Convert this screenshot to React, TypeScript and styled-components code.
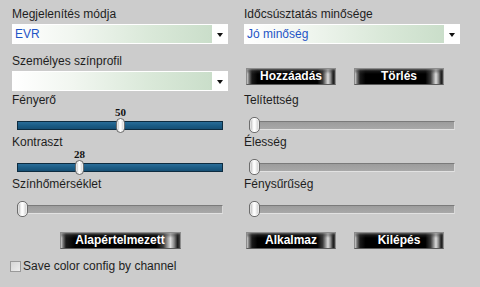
import React from "react";
import styled, { createGlobalStyle } from "styled-components";

const GlobalStyle = createGlobalStyle`
  html, body {
    margin: 0;
    padding: 0;
    background: #cccccc;
  }
  body {
    font-family: "Liberation Sans", Arial, sans-serif;
    font-size: 12px;
    color: #1e1e1e;
  }
`;

const Page = styled.div`
  width: 480px;
  height: 287px;
  box-sizing: border-box;
  padding: 7px 0 0 12px;
  background: #cccccc;
  overflow: hidden;
`;

const Grid = styled.div`
  display: grid;
  grid-template-columns: 216px 216px;
  grid-template-rows: 47px 39px 42px 42px 55px 17px;
  column-gap: 16px;
`;

const Cell = styled.div<{ $center?: boolean }>`
  display: flex;
  flex-direction: column;
  align-items: ${(p) => (p.$center ? "center" : "stretch")};
`;

const Label = styled.div`
  height: 14px;
  line-height: 14px;
  white-space: nowrap;
`;

const SelectBox = styled.div`
  margin-top: 3px;
  height: 20px;
  box-sizing: border-box;
  padding: 1px 0 1px 1px;
  display: flex;
  background: #ffffff;
`;

const SelectValue = styled.div`
  flex: 1;
  padding-left: 2px;
  line-height: 18px;
  color: #1f55c6;
  background: linear-gradient(to right, #ffffff 0%, #f1f6f0 30%, #d9e8d8 70%, #cadeca 100%);
`;

const ArrowCell = styled.div`
  width: 16px;
  display: flex;
  align-items: center;
  justify-content: center;

  &::after {
    content: "";
    display: block;
    margin-top: 1px;
    border-left: 3px solid transparent;
    border-right: 3px solid transparent;
    border-top: 4px solid #111;
  }
`;

const SliderBox = styled.div`
  position: relative;
  height: 27px;
  margin: 0 5px;
`;

const Track = styled.div<{ $on?: boolean }>`
  position: absolute;
  left: 0;
  right: 0;
  top: 14px;
  height: 9px;
  box-sizing: border-box;
  ${(p) =>
    p.$on
      ? `
    border: 1px solid #0e2c40;
    background: linear-gradient(to bottom, #2a6d98 0%, #1c5d86 50%, #174f74 100%);
  `
      : `
    border-top: 1px solid #7a7a7a;
    border-left: 1px solid #8a8a8a;
    border-bottom: 1px solid #e2e2e2;
    border-right: 1px solid #d8d8d8;
    background: linear-gradient(to bottom, #9c9c9c 0%, #a8a8a8 100%);
  `}
`;

const Thumb = styled.div<{ $on?: boolean }>`
  position: absolute;
  top: ${(p) => (p.$on ? "11px" : "10px")};
  width: ${(p) => (p.$on ? "9px" : "11px")};
  height: ${(p) => (p.$on ? "15px" : "16px")};
  box-sizing: border-box;
  border: 1px solid #6d6d6d;
  border-radius: 5px;
  background: linear-gradient(to right, #a8a8a8 0%, #f8f8f8 35%, #ffffff 55%, #c4c4c4 100%);
  box-shadow: inset 0 0 0 1px rgba(255, 255, 255, 0.6);
`;

const Value = styled.div`
  position: absolute;
  top: -1px;
  transform: translateX(-50%);
  font-family: "Liberation Serif", "Times New Roman", serif;
  font-weight: bold;
  font-size: 11px;
  line-height: 12px;
  color: #111;
`;

const ButtonRow = styled.div<{ $top?: number }>`
  display: flex;
  gap: 18px;
  padding-left: 2px;
  margin-top: ${(p) => p.$top ?? 0}px;
`;

const MetalButton = styled.button<{ $w?: number }>`
  width: ${(p) => p.$w ?? 90}px;
  height: 17px;
  padding: 0;
  box-sizing: border-box;
  border: 1px solid #8c8c8c;
  border-bottom-color: #5a5a5a;
  font-family: "Liberation Sans", Arial, sans-serif;
  font-weight: bold;
  font-size: 12px;
  line-height: 15px;
  color: #ffffff;
  cursor: pointer;
  background:
    linear-gradient(to bottom, rgba(140, 140, 140, 0.7) 0, rgba(60, 60, 60, 0.4) 2px, rgba(0, 0, 0, 0) 5px, rgba(0, 0, 0, 0) 100%),
    linear-gradient(
      to right,
      #d0d0d0 0,
      #777 2px,
      #1a1a1a 5px,
      #000 12%,
      #000 80%,
      #3a3a3a 86%,
      #dcdcdc 92%,
      #8a8a8a 95%,
      #1a1a1a 98%,
      #4a4a4a 100%
    );
`;

const CheckRow = styled.label`
  display: flex;
  align-items: center;
  gap: 2px;
  margin-top: 10px;
  margin-left: -2px;
  height: 14px;
  line-height: 14px;
`;

const CheckBox = styled.span`
  width: 11px;
  height: 11px;
  box-sizing: border-box;
  border: 1px solid #9a9a9a;
  background: linear-gradient(135deg, #d6d6d6 0%, #eeeeee 100%);
`;

type SliderProps = { label: string; value: number; on?: boolean };

const Slider = ({ label, value, on }: SliderProps) => {
  const thumbW = on ? 9 : 11;
  // enabled sliders leave a small margin at the ends, disabled ones sit flush
  const left = on ? 6 + (value / 100) * 186 : (value / 100) * (206 - thumbW);
  return (
    <Cell>
      <Label>{label}</Label>
      <SliderBox>
        <Track $on={on} />
        {on && <Value style={{ left: left + thumbW / 2 }}>{value}</Value>}
        <Thumb $on={on} style={{ left }} />
      </SliderBox>
    </Cell>
  );
};

const Select = ({ label, value }: { label: string; value: string }) => (
  <Cell>
    <Label>{label}</Label>
    <SelectBox>
      <SelectValue>{value}</SelectValue>
      <ArrowCell />
    </SelectBox>
  </Cell>
);

export default function App(): JSX.Element {
  return (
    <Page>
      <GlobalStyle />
      <Grid>
        <Select label="Megjelenítés módja" value="EVR" />
        <Select label="Időcsúsztatás minősége" value="Jó minőség" />

        <Select label="Személyes színprofil" value="" />
        <Cell>
          <ButtonRow $top={14}>
            <MetalButton>Hozzáadás</MetalButton>
            <MetalButton>Törlés</MetalButton>
          </ButtonRow>
        </Cell>

        <Slider label="Fényerő" value={50} on />
        <Slider label="Telítettség" value={0} />

        <Slider label="Kontraszt" value={28} on />
        <Slider label="Élesség" value={0} />

        <Slider label="Színhőmérséklet" value={0} />
        <Slider label="Fénysűrűség" value={0} />

        <Cell $center>
          <MetalButton $w={121}>Alapértelmezett</MetalButton>
        </Cell>
        <Cell>
          <ButtonRow>
            <MetalButton>Alkalmaz</MetalButton>
            <MetalButton>Kilépés</MetalButton>
          </ButtonRow>
        </Cell>
      </Grid>
      <CheckRow>
        <CheckBox />
        Save color config by channel
      </CheckRow>
    </Page>
  );
}
